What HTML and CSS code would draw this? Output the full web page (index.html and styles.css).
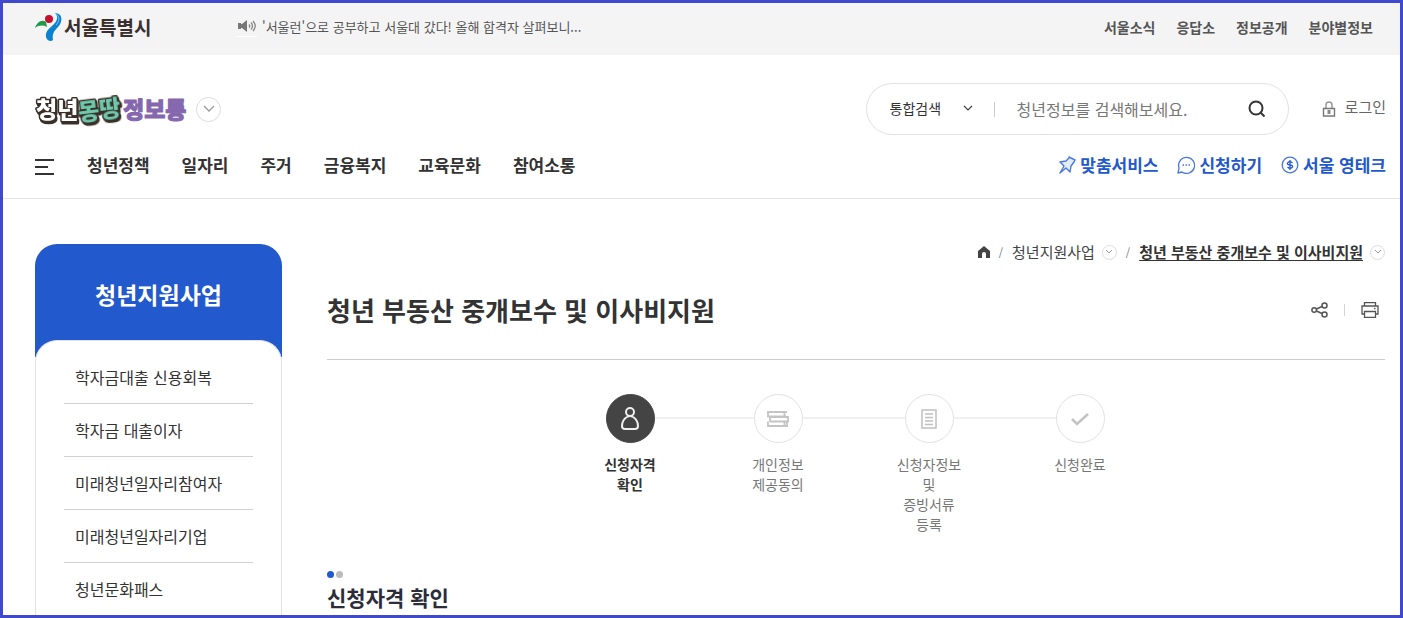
FILE: index.html
```html
<!DOCTYPE html>
<html lang="ko">
<head>
    <meta charset="UTF-8">
    <meta name="viewport" content="width=device-width, initial-scale=1.0">
    <title>청년 부동산 중개보수 및 이사비지원 - 청년몽땅정보통</title>
    <link rel="stylesheet" href="styles.css">
</head>
<body>
    <div class="topbar">
        <a href="#" class="city-logo">
            <svg width="28" height="30" viewBox="0 0 28 30" aria-hidden="true">
                <path d="M0 16C2 10 7 7 11 10l1 5C8 13 4 13 0 16z" fill="#1f9a48"/>
                <circle cx="14" cy="7" r="4" fill="#c8102e"/>
                <path d="M20 1c8 0 8 9 3 14-4 4-6 7-5 13-2 2-6 1-7-3-1-6 4-9 8-13 4-4 4-8 1-11z" fill="#0b82cf"/>
                <path d="M20 1c5 3 5 8 1 12" fill="none" stroke="#7cc4ec" stroke-width="1"/>
            </svg>
            <span>서울특별시</span>
        </a>
        <a href="#" class="notice">
            <svg width="20" height="20" viewBox="0 0 20 20" aria-hidden="true">
                <path d="M1 7h4l5-4v12l-5-4H1z" fill="#777"/>
                <path d="M1 6h3v6H1z" fill="#777"/>
                <path d="M12 7.500q1.500 1.500 0 3M14 5.500q3 3.500 0 7M16 4q4.500 5 0 10" fill="none" stroke="#888" stroke-width="1.300"/>
                <path d="M0 19.500h20" stroke="#fff"/>
            </svg>
            <span>'서울런'으로 공부하고 서울대 갔다! 올해 합격자 살펴보니...</span>
        </a>
        <nav class="topbar-links">
            <a href="#">서울소식</a>
            <a href="#">응답소</a>
            <a href="#">정보공개</a>
            <a href="#">분야별정보</a>
        </nav>
    </div>

    <header class="header">
        <div class="header-row">
            <a href="#" class="site-logo">
                <svg width="153" height="40" viewBox="0 0 153 40">
                    <text class="logo-white" x="1" y="29">청년</text>
                    <text class="logo-green" x="43" y="29" transform="rotate(-7 65 20)">몽땅</text>
                    <text class="logo-purple" x="88" y="29">정보통</text>
                </svg>
            </a>
            <button type="button" class="round-btn" aria-label="사이트 목록 열기">
                <svg width="12" height="8" viewBox="0 0 12 8"><path d="M1 1l5 5 5-5" fill="none" stroke="#999" stroke-width="1.300"/></svg>
            </button>

            <form class="search" onsubmit="return false">
                <select id="search-type" aria-label="검색 구분">
                    <option>통합검색</option>
                </select>
                <svg class="search-arrow" width="10" height="6" viewBox="0 0 10 6" aria-hidden="true"><path d="M1 1l4 4 4-4" fill="none" stroke="#444" stroke-width="1.200"/></svg>
                <span class="search-bar"></span>
                <input type="text" id="search-text" aria-label="검색어" placeholder="청년정보를 검색해보세요.">
                <button type="submit" aria-label="검색">
                    <svg width="18" height="18" viewBox="0 0 18 18"><circle cx="8" cy="8" r="6.500" fill="none" stroke="#333" stroke-width="2"/><path d="M12.500 12.500l4 4" stroke="#333" stroke-width="2"/></svg>
                </button>
            </form>

            <a href="#" class="login">
                <svg width="14" height="16" viewBox="0 0 14 16" aria-hidden="true">
                    <path d="M4 7V4q0-3 3-3t3 3v3" fill="none" stroke="#999" stroke-width="1.500"/>
                    <path d="M1.500 7.500h11v7.500h-11z" fill="none" stroke="#777" stroke-width="1.400"/>
                    <path d="M7 9v4" stroke="#888" stroke-width="3"/>
                </svg>
                <span>로그인</span>
            </a>
        </div>

        <div class="nav-row">
            <button type="button" class="menu-btn" aria-label="전체메뉴">
                <span></span><span></span><span></span>
            </button>
            <nav class="main-nav">
                <a href="#">청년정책</a>
                <a href="#">일자리</a>
                <a href="#">주거</a>
                <a href="#">금융복지</a>
                <a href="#">교육문화</a>
                <a href="#">참여소통</a>
            </nav>
            <nav class="quick-nav">
                <a href="#">
                    <svg width="18" height="18" viewBox="0 0 18 18" aria-hidden="true"><path d="M11 1l6 3-1 2-3 4-1 6-4-4-6 5 4-7-4-4 6-1 3-3z" fill="#e4ecfb" stroke="#4a78dc" stroke-width="1.400" stroke-linejoin="round"/></svg>
                    맞춤서비스
                </a>
                <a href="#">
                    <svg width="18" height="18" viewBox="0 0 18 18" aria-hidden="true"><path d="M1 17l1-5a8 8 0 1 1 3 4z" fill="none" stroke="#4a78dc" stroke-width="1.300" stroke-linejoin="round"/><path d="M5.500 9h1.500m1.500 0h1.500m1.500 0h1.500" stroke="#4a78dc" stroke-width="1.300"/></svg>
                    신청하기
                </a>
                <a href="#">
                    <svg width="18" height="18" viewBox="0 0 18 18" aria-hidden="true"><circle cx="9" cy="9" r="7.800" fill="none" stroke="#4a78dc" stroke-width="1.300"/><path d="M11.500 7Q9 4.500 7 6.500T9 9t2 2.500T6.500 11M9 4v10" fill="none" stroke="#2259cc" stroke-width="1.300"/></svg>
                    서울 영테크
                </a>
            </nav>
        </div>
    </header>

    <div class="container">
        <aside class="sidebar">
            <h2>청년지원사업</h2>
            <ul>
                <li><a href="#">학자금대출 신용회복</a></li>
                <li><a href="#">학자금 대출이자</a></li>
                <li><a href="#">미래청년일자리참여자</a></li>
                <li><a href="#">미래청년일자리기업</a></li>
                <li><a href="#">청년문화패스</a></li>
            </ul>
        </aside>

        <main class="content">
            <div class="breadcrumb">
                <a href="#" class="home" aria-label="홈">
                    <svg width="12" height="12" viewBox="0 0 12 12"><path d="M6 0l6 5v7H8V8a2 2 0 0 0-4 0v4H0V5z" fill="#444"/></svg>
                </a>
                <span class="slash">/</span>
                <a href="#">청년지원사업</a>
                <button type="button" class="round-btn small" aria-label="메뉴 열기">
                    <svg width="6" height="4" viewBox="0 0 6 4"><path d="M0 0l3 3 3-3" fill="none" stroke="#999"/></svg>
                </button>
                <span class="slash">/</span>
                <a href="#" class="current">청년 부동산 중개보수 및 이사비지원</a>
                <button type="button" class="round-btn small" aria-label="메뉴 열기">
                    <svg width="6" height="4" viewBox="0 0 6 4"><path d="M0 0l3 3 3-3" fill="none" stroke="#999"/></svg>
                </button>
            </div>

            <div class="page-title">
                <h1>청년 부동산 중개보수 및 이사비지원</h1>
                <div class="tools">
                    <button type="button" aria-label="공유">
                        <svg width="17" height="16" viewBox="0 0 17 16" fill="none" stroke="#555" stroke-width="1.500"><circle cx="3.200" cy="8" r="2.300"/><circle cx="13.500" cy="3.500" r="2.500"/><circle cx="13.500" cy="12.500" r="2.500"/><path d="M5.500 7l5.500-2.500M5.500 9l5.500 2.500"/></svg>
                    </button>
                    <span class="tools-bar"></span>
                    <button type="button" aria-label="인쇄">
                        <svg width="18" height="16" viewBox="0 0 18 16" fill="none" stroke="#555" stroke-width="1.300"><path d="M3.500 4V.7h11V4M3.500 12H1V4h16v8h-2.500"/><path d="M3.500 9.500h11v5.800h-11z"/><path d="M13 6.500h1.500"/></svg>
                    </button>
                </div>
            </div>

            <ol class="steps">
                <li class="active">
                    <span class="circle">
                        <svg width="20" height="26" viewBox="0 0 20 26" fill="none" stroke="#eee" stroke-width="2"><circle cx="10" cy="6" r="4"/><path d="M7 11Q2 14 2 20q0 3 3 3h10q3 0 3-3 0-6-5-9"/><path d="M7 11q3-2 6 0"/></svg>
                    </span>
                    <span class="label">신청자격 확인</span>
                </li>
                <li>
                    <span class="circle">
                        <svg width="22" height="18" viewBox="0 0 22 18" fill="none" stroke="#c4c4c4" stroke-width="1.800"><path d="M20 2H1v4.500h18M17.500 2v4.500M3 6.500V12M3 7h18v4.500H3M1 11.500V16h19v-4.500M17.500 12v4"/></svg>
                    </span>
                    <span class="label">개인정보 제공동의</span>
                </li>
                <li>
                    <span class="circle">
                        <svg width="16" height="20" viewBox="0 0 16 20" fill="none" stroke="#c0c0c0" stroke-width="1.500"><path d="M1 1h14v18H1z"/><path d="M4 5h8M4 8.500h8M4 12h8M4 15.500h8"/></svg>
                    </span>
                    <span class="label">신청자정보 및 증빙서류 등록</span>
                </li>
                <li>
                    <span class="circle">
                        <svg width="20" height="14" viewBox="0 0 20 14"><path d="M2 7l5 5L18 2" fill="none" stroke="#c4c4c4" stroke-width="2.500"/></svg>
                    </span>
                    <span class="label">신청완료</span>
                </li>
            </ol>

            <section class="check">
                <div class="dots"><span></span><span></span></div>
                <h2>신청자격 확인</h2>
            </section>
        </main>
    </div>
</body>
</html>
```
FILE: styles.css
```css
* {
    box-sizing: border-box;
}
body {
    display: flex;
    flex-direction: column;
    height: 100vh;
    margin: 0;
    overflow: hidden;
    border: 3px solid #4048cc;
    background: #fff;
    color: #333;
    font-family: "Noto Sans CJK KR", "Noto Sans", sans-serif;
    font-size: 16px;
    line-height: 20px;
    word-break: keep-all;
}
a {
    color: inherit;
    text-decoration: none;
    white-space: nowrap;
}
h1, h2, ul, ol {
    margin: 0;
    padding: 0;
}
ul, ol {
    list-style: none;
}
button {
    display: flex;
    align-items: center;
    justify-content: center;
    padding: 0;
    border: 0;
    background: none;
    cursor: pointer;
}
svg {
    display: block;
    flex: none;
}

/* top bar */
.topbar {
    display: flex;
    flex: none;
    align-items: center;
    height: 52px;
    padding: 0 27px 4px 32px;
    background: #f4f4f4;
}
.city-logo {
    display: flex;
    align-items: center;
    gap: 1px;
    width: 202px;
    color: #3a3030;
    font-size: 19px;
    font-weight: 700;
}
.notice {
    display: flex;
    align-items: center;
    gap: 5px;
    color: #555;
    font-size: 13px;
}
.topbar-links {
    display: flex;
    gap: 21px;
    margin-left: auto;
    color: #555;
    font-size: 14px;
    font-weight: 700;
}

/* header */
.header {
    flex: none;
    padding: 28px 14px 0 32px;
    border-bottom: 1px solid #e5e5e5;
}
.header-row {
    display: flex;
    align-items: center;
    height: 52px;
}
.site-logo text {
    font-size: 23px;
    font-weight: 900;
    paint-order: stroke;
    stroke-linejoin: round;
}
.site-logo .logo-white,
.site-logo .logo-green {
    stroke: #3a3028;
    stroke-width: 3px;
    filter: drop-shadow(1px 2px 0 #3a3028);
}
.logo-white {
    fill: #fff;
}
.logo-green {
    fill: #6cc9ad;
}
.logo-purple {
    fill: #8467ae;
    stroke: #8467ae;
    stroke-width: 1px;
}
.round-btn {
    flex: none;
    width: 25px;
    height: 25px;
    margin-left: 8px;
    border: 1px solid #ddd;
    border-radius: 50%;
}
.round-btn.small {
    width: 15px;
    height: 15px;
    margin-left: 7px;
}
.search {
    display: flex;
    align-items: center;
    width: 423px;
    height: 52px;
    margin-left: auto;
    padding: 0 20px 0 23px;
    border: 1px solid #e2e2e2;
    border-radius: 26px;
}
.search select {
    width: 88px;
    padding: 0 0 2px;
    border: 0;
    background: none;
    color: #333;
    font: inherit;
    font-size: 14px;
    appearance: none;
}
.search-arrow {
    margin: 0 0 2px -15px;
    pointer-events: none;
}
.search-bar {
    width: 1px;
    height: 15px;
    margin: 0 22px 0 21px;
    background: #ccc;
}
.search input {
    flex: 1;
    min-width: 0;
    padding: 0 0 1px;
    border: 0;
    outline: 0;
    background: none;
    font: inherit;
}
.search input::placeholder {
    color: #777;
    opacity: 1;
}
.search button {
    width: 22px;
    height: 22px;
}
.login {
    display: flex;
    align-items: center;
    gap: 9px;
    margin-left: 33px;
    color: #666;
    font-size: 15px;
}
.login span {
    padding-bottom: 4px;
}
.nav-row {
    display: flex;
    align-items: center;
    height: 63px;
}
.menu-btn {
    flex-direction: column;
    align-items: flex-start;
    gap: 5px;
    width: 19px;
    margin-right: 33px;
}
.menu-btn span {
    width: 19px;
    height: 2px;
    background: #333;
}
.menu-btn span:nth-child(2) {
    width: 13px;
}
.main-nav {
    display: flex;
    gap: 32px;
    padding-bottom: 4px;
    font-size: 17px;
    font-weight: 700;
}
.quick-nav {
    display: flex;
    gap: 19px;
    margin-left: auto;
    padding-bottom: 3px;
    color: #2259cc;
    font-size: 17px;
    font-weight: 700;
}
.quick-nav a {
    display: flex;
    align-items: center;
    gap: 4px;
}

/* body */
.container {
    display: flex;
    flex: 1;
    gap: 45px;
    min-height: 0;
    padding: 45px 15px 0 32px;
}
.sidebar {
    display: flex;
    flex: none;
    flex-direction: column;
    width: 247px;
}
.sidebar h2 {
    flex: none;
    height: 113px;
    padding-top: 35px;
    border-radius: 22px 22px 0 0;
    background: #2259cc;
    color: #fff;
    font-size: 23px;
    line-height: 30px;
    text-align: center;
}
.sidebar ul {
    flex: 1;
    margin-top: -17px;
    padding: 10px 28px 0;
    border: 1px solid #e2e2e2;
    border-bottom: 0;
    border-radius: 22px 22px 0 0;
    background: #fff;
}
.sidebar li {
    padding: 16px 0 16px 11px;
    border-bottom: 1px solid #d0d0d0;
}
.content {
    flex: 1;
    min-width: 0;
}
.breadcrumb {
    display: flex;
    align-items: center;
    justify-content: flex-end;
    height: 16px;
    color: #444;
    font-size: 15px;
}
.slash {
    margin: 0 9px;
    color: #777;
    font-size: 11px;
}
.current {
    color: #333;
    font-weight: 700;
    text-decoration: underline;
    text-underline-offset: 2px;
}
.page-title {
    display: flex;
    align-items: center;
    justify-content: space-between;
    height: 100px;
    padding-right: 6px;
    border-bottom: 1px solid #ccc;
}
.page-title h1 {
    font-size: 26px;
    line-height: 40px;
}
.tools {
    display: flex;
    align-items: center;
    gap: 16px;
}
.tools-bar {
    width: 1px;
    height: 12px;
    background: #d5d5d5;
}
.steps {
    display: grid;
    grid-template-columns: 146px 150px 152px 150px;
    justify-content: center;
    min-height: 176px;
    padding-top: 34px;
}
.steps li {
    position: relative;
    display: flex;
    flex-direction: column;
    align-items: center;
    gap: 11px;
    color: #777;
    font-size: 14px;
}
.steps li + li::before {
    content: "";
    position: absolute;
    top: 23px;
    right: 50%;
    width: 100%;
    height: 2px;
    background: #f0f0f0;
}
.circle {
    z-index: 1;
    display: flex;
    align-items: center;
    justify-content: center;
    width: 49px;
    height: 49px;
    border: 1px solid #e2e2e2;
    border-radius: 50%;
    background: #fff;
}
.label {
    width: 68px;
    text-align: center;
}
.steps .active {
    z-index: 1;
    color: #333;
    font-weight: 700;
}
.active .circle {
    border-color: #444;
    background: #444;
}
.dots {
    display: flex;
    gap: 2px;
    margin-top: 35px;
}
.dots span {
    width: 7px;
    height: 7px;
    border-radius: 50%;
    background: #2259cc;
}
.dots span + span {
    background: #bbb;
}
.check h2 {
    margin-top: 4px;
    color: #2d2d3a;
    font-size: 21px;
    line-height: 30px;
}
```
